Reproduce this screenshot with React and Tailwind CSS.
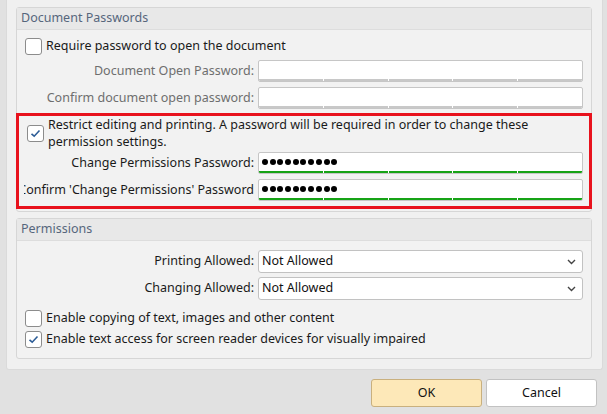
import React from 'react';

const font = { fontFamily: '"Noto Sans", "Open Sans", sans-serif' };

function CheckBox({ checked }) {
  return (
    <span className="w-[17px] h-[17px] shrink-0 rounded-[3px] border border-[#8c8c8c] bg-white flex items-center justify-center">
      {checked && (
        <svg width="11" height="9" viewBox="0 0 11 9">
          <path d="M1.5 4.8 L4.2 7.2 L9.5 1.5" fill="none" stroke="#2c5c96" strokeWidth="1.6" />
        </svg>
      )}
    </span>
  );
}

function PasswordBox({ filled }) {
  return (
    <div className="w-[325px] h-[22px] shrink-0 rounded-[2px] border border-[#c6c6c6] bg-white flex flex-col overflow-hidden">
      <div className="flex-1 flex items-center pl-[3px] gap-[1.7px]">
        {filled && Array.from({ length: 10 }).map((_, i) => (
          <span key={i} className="w-[6px] h-[6px] rounded-full bg-black" />
        ))}
      </div>
      <div className="flex gap-px h-[2px] bg-white">
        {[0, 1, 2, 3, 4].map(i => (
          <span key={i} className={filled ? 'flex-1 bg-[#16a316]' : 'flex-1 bg-[#c8c8c8]'} />
        ))}
      </div>
    </div>
  );
}

function LabelRow({ label, disabled, children, className = '' }) {
  return (
    <div className={`flex items-center gap-[4px] ${className}`}>
      <div className={`flex-1 min-w-0 overflow-hidden whitespace-nowrap flex justify-end ${disabled ? 'text-[#6e6e6e]' : 'text-[#1a1a1a]'}`}>
        <span className="shrink-0">{label}</span>
      </div>
      {children}
    </div>
  );
}

function Select({ value }) {
  return (
    <div className="w-[325px] h-[23px] shrink-0 rounded-[3px] border border-[#c2c2c2] bg-white flex items-center justify-between pl-[3px] pr-[6px] text-[#111]">
      <span>{value}</span>
      <svg width="9" height="6" viewBox="0 0 9 6">
        <path d="M1 1 L4.5 4.5 L8 1" fill="none" stroke="#444" strokeWidth="1.4" />
      </svg>
    </div>
  );
}

function GroupHeader({ title }) {
  return (
    <div className="h-[22px] bg-[#e8e8e8] border-b border-[#dddddd] flex items-center pl-[4px] text-[#56667c]">
      {title}
    </div>
  );
}

export default function App() {
  return (
    <div className="w-[607px] h-[414px] bg-[#e1e1e1] overflow-hidden text-[12.5px]" style={font}>
      <div className="ml-[6px] w-[597px] h-[370px] bg-[#f0f0f0] border-l border-b border-r border-[#dadada] rounded-b-[3px] pt-[7px] pl-[9px] pr-[10px]">

        {/* Document Passwords */}
        <div className="h-[205px] border border-[#d6d6d6] rounded-[3px] bg-[#f2f2f2] flex flex-col">
          <GroupHeader title="Document Passwords" />
          <div className="flex items-center gap-[4px] pl-[8px] mt-[8px] h-[17px] text-[#1a1a1a]">
            <CheckBox />
            <span>Require password to open the document</span>
          </div>
          <LabelRow label="Document Open Password:" disabled className="mt-[5px] pr-[8px]">
            <PasswordBox />
          </LabelRow>
          <LabelRow label="Confirm document open password:" disabled className="mt-[5px] pr-[8px]">
            <PasswordBox />
          </LabelRow>

          {/* highlighted section */}
          <div className="-mx-px mt-[4px] h-[96px] border-[3px] border-[#e8121d] pl-[5px] pr-[6px] flex flex-col">
            <div className="flex items-center gap-[4px] pl-[3px] text-[#1a1a1a] leading-[17px]">
              <CheckBox checked />
              <span>Restrict editing and printing. A password will be required in order to change these permission settings.</span>
            </div>
            <LabelRow label="Change Permissions Password:" className="mt-[2px]">
              <PasswordBox filled />
            </LabelRow>
            <LabelRow label="Confirm 'Change Permissions' Password" className="mt-[5px]">
              <PasswordBox filled />
            </LabelRow>
          </div>
        </div>

        {/* Permissions */}
        <div className="mt-[6px] h-[141px] border border-[#d6d6d6] rounded-[3px] bg-[#f2f2f2] flex flex-col">
          <GroupHeader title="Permissions" />
          <LabelRow label="Printing Allowed:" className="mt-[9px] pr-[8px]">
            <Select value="Not Allowed" />
          </LabelRow>
          <LabelRow label="Changing Allowed:" className="mt-[4px] pr-[8px]">
            <Select value="Not Allowed" />
          </LabelRow>
          <div className="flex items-center gap-[4px] pl-[8px] mt-[10px] h-[17px] text-[#1a1a1a]">
            <CheckBox />
            <span>Enable copying of text, images and other content</span>
          </div>
          <div className="flex items-center gap-[4px] pl-[8px] mt-[4px] h-[17px] text-[#1a1a1a]">
            <CheckBox checked />
            <span>Enable text access for screen reader devices for visually impaired</span>
          </div>
        </div>
      </div>

      {/* Buttons */}
      <div className="flex justify-end gap-[4px] pr-[10px] mt-[9px]">
        <button className="w-[111px] h-[28px] rounded-[3px] border border-[#c9b07e] bg-[#fde8b8] text-[#111]">OK</button>
        <button className="w-[111px] h-[28px] rounded-[3px] border border-[#c2c2c2] bg-white text-[#111]">Cancel</button>
      </div>
    </div>
  );
}
